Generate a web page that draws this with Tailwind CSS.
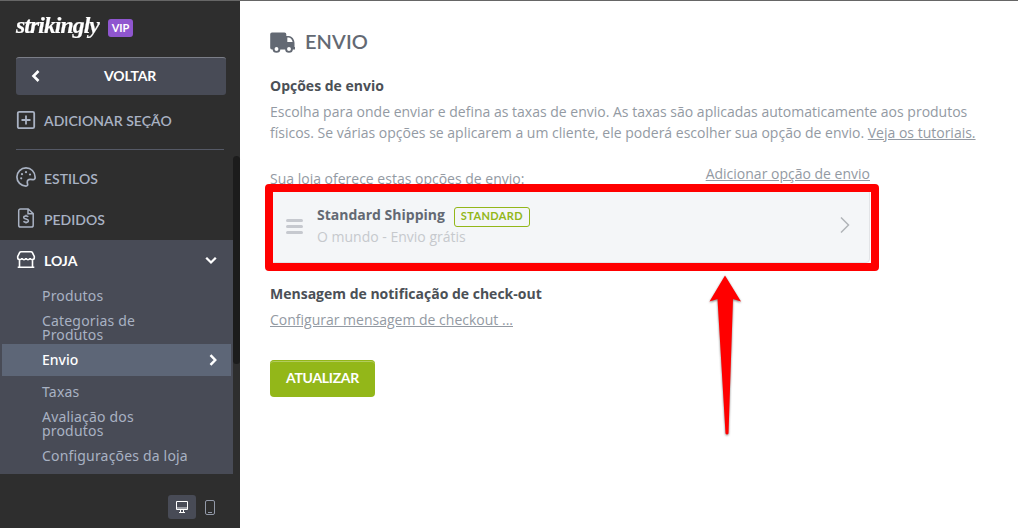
<!DOCTYPE html>
<html lang="pt">
<head>
  <meta charset="UTF-8" />
  <meta name="viewport" content="width=device-width, initial-scale=1.0" />
  <title>Envio</title>
  <script src="https://cdn.jsdelivr.net/npm/@tailwindcss/browser@4"></script>
</head>
<body class="relative flex h-[528px] w-[1018px] overflow-hidden border-t border-[#666666] bg-white font-['Open_Sans',sans-serif] text-sm text-[#939aa3]">

  <!-- Sidebar -->
  <aside class="flex w-60 shrink-0 flex-col bg-[#2e2e2e] font-[Lato,sans-serif] text-[#a9b2c3]">
    <div class="flex h-14 items-start gap-2 pl-4">
      <span class="mt-[11px] w-[84px] origin-left scale-x-[1.03] whitespace-nowrap font-['Liberation_Serif',serif] text-[23px] leading-7 font-bold tracking-[-0.9px] text-white italic [-webkit-text-stroke:0.2px_white]">strikingly</span>
      <span class="mt-[18px] flex h-[18px] w-[25px] items-center justify-center rounded-[3px] bg-[#8f56cf] text-[11px] font-bold text-white">VIP</span>
    </div>

    <button class="ml-4 flex h-[38px] w-[210px] items-center rounded-[3px] border-t border-[#7b7e88] bg-[#484b56] pb-0.5 text-white">
      <svg class="ml-[14px] h-3 w-3" viewBox="0 0 12 12" fill="none" stroke="currentColor" stroke-width="2.6"><path d="M8.5 1 3.5 6l5 5" /></svg>
      <span class="ml-[62px] text-sm font-bold tracking-[-0.1px]">VOLTAR</span>
    </button>

    <div class="flex h-[54px] items-center pb-[4px] pl-4">
      <svg class="h-5 w-5" viewBox="0 0 20 20" fill="none" stroke="currentColor" stroke-width="1.8"><rect x="1.8" y="1.8" width="16.4" height="16.4" rx="1.5" /><path d="M10 5.5v9M5.5 10h9" /></svg>
      <span class="mt-0.5 ml-2 font-semibold tracking-[0.05px]">ADICIONAR SEÇÃO</span>
    </div>

    <div class="ml-4 w-52 border-t border-[#555966]"></div>

    <div class="flex min-h-0 flex-1">
      <nav class="w-[233px] pt-[7px]">
        <div class="flex h-[41px] items-center pb-0.5 pl-4">
          <svg class="h-5 w-5" viewBox="0 0 20 20" fill="none" stroke="currentColor" stroke-width="1.7"><path d="M10 .9C5 .9.9 5 .9 10S5 19.1 10 19.1c1.2 0 1.8-.8 1.6-1.8l-.3-1.7c-.2-2.1 1-3.3 3-3.2l2.6.2c1.6.1 2.3-.9 2.2-2.4C19 4.8 15 .9 10 .9Z" /><g fill="currentColor" stroke="none"><circle cx="5.2" cy="11.3" r="1.1" /><circle cx="6" cy="7.2" r="1.1" /><circle cx="10" cy="5.2" r="1.1" /><circle cx="14" cy="7.5" r="1.1" /></g></svg>
          <span class="mt-[5px] ml-2 font-semibold">ESTILOS</span>
        </div>
        <div class="flex h-[42px] items-center pb-[3px] pl-4">
          <svg class="h-5 w-5" viewBox="0 0 20 20" fill="none" stroke="currentColor" stroke-width="1.5"><path d="M4.5.9h7.7l5 4.6v11.7c0 1.2-.7 1.9-1.8 1.9H4.5c-1.1 0-1.8-.7-1.8-1.9V2.8C2.7 1.6 3.4.9 4.5.9ZM12 1v4.8h5" /><path d="M12.3 8.8c-.5-.6-1.3-.9-2.3-.9-1.4 0-2.3.6-2.3 1.5 0 2.3 4.7 1 4.7 3.3 0 1-.9 1.6-2.4 1.6-1.1 0-2-.3-2.5-1M10 6.7v1.2M10 14.3v1.3" /></svg>
          <span class="mt-[5px] ml-2 font-semibold">PEDIDOS</span>
        </div>

        <div class="h-[234px] bg-[#484b56]">
          <div class="flex h-10 items-center pb-[1px] pl-4 text-white">
            <svg class="h-5 w-5" viewBox="0 0 20 20" fill="none" stroke="currentColor" stroke-width="1.6"><path d="M5 1.8h10c.7 0 1.1.2 1.4.8l1.9 3.9v1.3c0 1.1-1 1.8-2.1 1.8s-2-.7-2.1-1.6c-.1.9-1 1.6-2.1 1.6S10.100 8.900 10 8c-.1.9-.9 1.600-2 1.600S6 8.900 5.900 8c-.1.9-1 1.600-2.100 1.600S1.700 8.900 1.700 7.800V6.500l1.900-3.900c.3-.6.7-.8 1.400-.8ZM3.500 9.600v7.700M16.500 9.600v7.700M1.700 17.300h16.600" /></svg>
            <span class="mt-[2px] ml-2 w-[161px] font-bold">LOJA</span>
            <svg class="h-3 w-3" viewBox="0 0 12 12" fill="none" stroke="currentColor" stroke-width="2.3"><path d="m1.2 3.8 4.8 4.7 4.8-4.7" /></svg>
          </div>
          <div class="font-['Noto_Sans',sans-serif] text-sm leading-[14px] tracking-[0.18px]">
            <div class="flex h-8 items-center pl-[42px]">Produtos</div>
            <div class="flex h-8 items-center pl-[42px]"><span class="w-[110px]">Categorias de Produtos</span></div>
            <div class="mr-0.5 ml-0.5 flex h-8 items-center bg-[#5d6677] pl-10 text-white">
              <span class="w-[167px] font-medium tracking-normal">Envio</span>
              <svg class="h-3 w-3" viewBox="0 0 12 12" fill="none" stroke="currentColor" stroke-width="2.5"><path d="m1.5 1.2 4.7 4.8-4.7 4.8" /></svg>
            </div>
            <div class="flex h-8 items-center pl-[42px]">Taxas</div>
            <div class="flex h-8 items-center pl-[42px]"><span class="w-[110px]">Avaliação dos produtos</span></div>
            <div class="flex h-8 items-center pl-[42px]">Configurações da loja</div>
          </div>
        </div>

        <div class="mt-[21px] flex items-center">
          <div class="ml-[168px] flex h-6 w-7 items-center justify-center rounded-[3px] bg-[#484b56] text-white">
            <svg class="h-3 w-3" viewBox="0 0 12 12" fill="none" stroke="currentColor"><path fill="#9a9ca3" stroke="none" d="M1 6h10v2H1z" /><path d="M.5.5h11v8H.5ZM4.5 8.5v3M7.5 8.5v3M3 11.5h6" /></svg>
          </div>
          <svg class="ml-[9px] h-[15px] w-2.5" viewBox="0 0 10 15" fill="none" stroke="#9299a8"><rect x=".5" y=".5" width="9" height="14" rx="1.5" /><path d="M3 12.5h4" /></svg>
        </div>
      </nav>
      <div class="mt-[6px] h-[208px] w-[7px] rounded-full bg-[#1c1c1c]"></div>
    </div>
  </aside>

  <!-- Content -->
  <main class="pt-[29px] pl-[30px]">
    <h1 class="flex h-6 items-center font-[Lato,sans-serif] text-xl font-semibold text-[#636973]">
      <svg class="h-[21px] w-[26px]" viewBox="0 0 26 21"><path fill="currentColor" d="M2 .5h12.5a1.8 1.8 0 0 1 1.8 1.8V4h2.5c3.5.3 5.7 3.7 5.7 7v4h.5v2.5H2A1.8 1.8 0 0 1 .2 15.7V2.3A1.8 1.8 0 0 1 2 .5Z" /><path fill="white" d="M17.3 5.5h1.5c2 .4 3.5 2.2 3.8 4.5h-5.3Z" /><g fill="white" stroke="currentColor" stroke-width="1.9"><circle cx="6.5" cy="17" r="2.9" /><circle cx="19" cy="17" r="2.9" /></g></svg>
      <span class="mb-0.5 ml-[9px] tracking-[0.1px]">ENVIO</span>
    </h1>

    <h2 class="mt-[21px] leading-[21px] font-bold text-[#4b5056]">Opções de envio</h2>
    <p class="mt-[5px] w-[720px] leading-[21px]">Escolha para onde enviar e defina as taxas de envio. As taxas são aplicadas automaticamente aos produtos<br />físicos. Se várias opções se aplicarem a um cliente, ele poderá escolher sua opção de envio. <a class="underline">Veja os tutoriais.</a></p>

    <div class="mt-5 flex h-[25px] w-[600px] justify-between leading-[21px]">
      <span class="pt-[5px]">Sua loja oferece estas opções de envio:</span>
      <a class="underline">Adicionar opção de envio</a>
    </div>

    <div class="mt-px h-[74px] w-[600px] rounded border border-[#e2e4e7] bg-[#f4f6f8]">
      <div class="flex h-[71px] items-center pl-[15px]">
        <div class="mt-0.5 flex w-[17px] flex-col gap-[3px]">
          <div class="h-[3px] rounded-sm bg-[#c6c9cf]"></div>
          <div class="h-[3px] rounded-sm bg-[#c6c9cf]"></div>
          <div class="h-[3px] rounded-sm bg-[#c6c9cf]"></div>
        </div>
        <div class="ml-[14px] w-[523px]">
          <div class="flex h-[22px] items-center">
            <span class="font-bold text-[#636973]">Standard Shipping</span>
            <span class="mt-1 ml-[9px] flex h-5 w-[76px] items-center justify-center rounded-[3px] border border-[#93b719] pb-0.5 font-[Lato,sans-serif] text-[11px] font-bold tracking-[0.4px] text-[#93b719]">STANDARD</span>
          </div>
          <div class="h-[21px] leading-[21px] text-[#c6c9cd]">O mundo - Envio grátis</div>
        </div>
        <svg class="mb-0.5 h-4 w-[10px]" viewBox="0 0 10 16" fill="none" stroke="#b1b4b8" stroke-width="1.5"><path d="m1 .5 7.5 7.5L1 15.5" /></svg>
      </div>
    </div>

    <h2 class="mt-5 leading-[21px] font-bold text-[#4b5056]">Mensagem de notificação de check-out</h2>
    <a class="mt-[5px] block leading-[21px] underline">Configurar mensagem de checkout ...</a>

    <button class="mt-[30px] flex h-[37px] w-[105px] items-center justify-center rounded border-t border-[#93b719] bg-[#93b719] pb-0.5 font-[Lato,sans-serif] font-bold tracking-[-0.3px] text-white shadow-[inset_0_1px_0_#b3cc5e]">ATUALIZAR</button>
  </main>

  <!-- Highlight over the shipping option -->
  <div class="absolute top-[183px] left-[265px] h-[87px] w-[614px] rounded border-8 border-[#ff0000]"></div>
  <svg class="absolute top-[269px] left-[700px] h-[175px] w-[50px] drop-shadow-[0_1px_1px_rgba(0,0,0,0.5)]" viewBox="0 0 50 175"><path fill="#ff0000" d="m25 5.5 16 26-8-2.5-4.500 134.500q-1.500 2-3 0L17.500 29 9.500 31.500Z" /></svg>
</body>
</html>
